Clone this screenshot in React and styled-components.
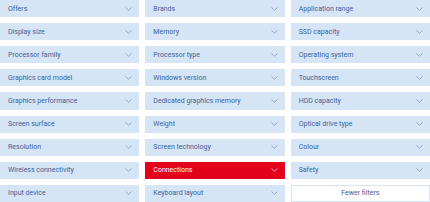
import styled, { createGlobalStyle } from "styled-components";

const GlobalStyle = createGlobalStyle`
  html, body {
    margin: 0;
    padding: 0;
    background: #ffffff;
  }
  body {
    font-family: Roboto, "Liberation Sans", Arial, sans-serif;
  }
`;

const filters = [
  "Offers",
  "Brands",
  "Application range",
  "Display size",
  "Memory",
  "SSD capacity",
  "Processor family",
  "Processor type",
  "Operating system",
  "Graphics card model",
  "Windows version",
  "Touchscreen",
  "Graphics performance",
  "Dedicated graphics memory",
  "HDD capacity",
  "Screen surface",
  "Weight",
  "Optical drive type",
  "Resolution",
  "Screen technology",
  "Colour",
  "Wireless connectivity",
  "Connections",
  "Safety",
  "Input device",
  "Keyboard layout",
];

const Grid = styled.div`
  width: 430px;
  height: 202px;
  display: grid;
  grid-template-columns: repeat(3, 1fr);
  grid-template-rows: repeat(9, 1fr);
  gap: 6px;
`;

const Filter = styled.button`
  display: flex;
  align-items: center;
  justify-content: space-between;
  margin: 0;
  padding: 0 7px 0 8px;
  border: none;
  background: ${(p) => (p.$active ? "#e3001b" : "#d6e5f6")};
  color: ${(p) => (p.$active ? "#ffffff" : "#3d6197")};
  font-family: inherit;
  font-size: 7px;
  text-align: left;
  cursor: pointer;
  svg {
    flex: none;
  }
`;

const Toggle = styled.button`
  margin: 0;
  padding: 0;
  border: 1px solid #d6e5f6;
  background: #ffffff;
  color: #3d6197;
  font-family: inherit;
  font-size: 7px;
  cursor: pointer;
`;

const Chevron = ({ color }) => (
  <svg width="7" height="4" viewBox="0 0 7 4">
    <path d="M0.5 0.5 L3.5 3.3 L6.5 0.5" fill="none" stroke={color} strokeWidth="0.7" />
  </svg>
);

const App = () => {
  return (
    <>
      <GlobalStyle />
      <Grid>
        {filters.map((name) => {
          const active = name === "Connections";
          return (
            <Filter key={name} $active={active}>
              <span>{name}</span>
              <Chevron color={active ? "#ffffff" : "#6f93c6"} />
            </Filter>
          );
        })}
        <Toggle>Fewer filters</Toggle>
      </Grid>
    </>
  );
};

export default App;
